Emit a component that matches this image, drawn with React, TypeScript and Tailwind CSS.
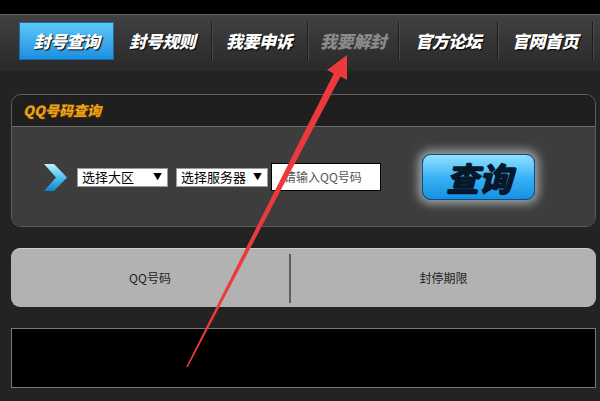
const navItems = [
  { label: "封号查询", w: "w-[95px]", active: true },
  { label: "封号规则", w: "w-[97px]" },
  { label: "我要申诉", w: "w-[96px]" },
  { label: "我要解封", w: "w-[92px]", dim: true },
  { label: "官方论坛", w: "w-[99px]" },
  { label: "官网首页", w: "w-[95px]" },
];

function Chevron() {
  return (
    <svg width="25" height="29" viewBox="0 0 25 29">
      <defs>
        <linearGradient id="chev" x1="0" y1="0" x2="0" y2="1">
          <stop offset="0" stopColor="#bff0ff" />
          <stop offset="0.5" stopColor="#4cc4f0" />
          <stop offset="1" stopColor="#1580c8" />
        </linearGradient>
      </defs>
      <polygon points="1,1 11,1 24,14.5 11,28 1,28 13,14.5" fill="url(#chev)" />
    </svg>
  );
}

function Arrow() {
  return (
    <svg
      className="pointer-events-none absolute left-0 top-0"
      width="600"
      height="401"
      viewBox="0 0 600 401"
    >
      <polygon
        points="347,55 327,70 333.8,73.5 186.3,366.7 187.7,367.3 340.5,76.5 347,80"
        fill="#ec3a3c"
      />
    </svg>
  );
}

export default function App() {
  return (
    <div
      className="relative h-[401px] w-[600px] overflow-hidden bg-[#232323]"
      style={{ fontFamily: '"Noto Sans CJK SC", "Noto Sans", sans-serif' }}
    >
      <div className="h-[14px] bg-black" />
      <div className="h-px bg-[#5c5c5c]" />
      {/* nav */}
      <nav className="flex h-[56px] items-start bg-gradient-to-b from-[#414141] to-[#292929] pl-[19px] pt-[7px]">
        {navItems.map((item, i) => (
          <div
            key={item.label}
            className={
              "flex h-[38px] items-center justify-center " +
              item.w +
              (item.active
                ? " bg-gradient-to-b from-[#5cc8f8] to-[#1a8fe0] border border-[#1b6aa0]"
                : "") +
              (i > 1 ? " border-l border-l-[#1a1a1a] shadow-[inset_1px_0_0_#4c4c4c]" : "")
            }
          >
            <span
              className={
                "text-[17px] font-black italic tracking-[-0.5px] " +
                (item.dim ? "text-[#8a8a8a]" : "text-white [text-shadow:1px_1px_1px_#000]")
              }
            >
              {item.label}
            </span>
          </div>
        ))}
        <div className="h-[38px] border-l border-l-[#1a1a1a] shadow-[inset_1px_0_0_#4c4c4c] w-[8px]" />
      </nav>

      {/* query panel */}
      <div className="ml-[11px] mr-[4px] mt-[23px] h-[133px] overflow-hidden rounded-[10px] border border-[#5e5e5e]">
        <div className="flex h-[32px] items-center border-b border-[#6a6a6a] bg-[#1f1f1f] pl-[11px]">
          <span className="text-[14px] font-black italic text-[#e9a21c] [text-shadow:0_0_1px_#5a3000,1px_1px_0_#4a2a00]">
            QQ号码查询
          </span>
        </div>
        <div className="flex h-[100px] items-center bg-[#3d3d3d] pl-[31px]">
          <Chevron />
          <div className="ml-[9px] flex h-[19px] w-[91px] items-center justify-between border border-[#9a9a9a] bg-white pl-[4px] pr-[5px] text-[13px] text-black">
            <span>选择大区</span>
            <span className="text-[9px]">▼</span>
          </div>
          <div className="ml-[8px] flex h-[19px] w-[92px] items-center justify-between border border-[#9a9a9a] bg-white pl-[4px] pr-[5px] text-[13px] text-black">
            <span>选择服务器</span>
            <span className="text-[9px]">▼</span>
          </div>
          <div className="ml-[3px] flex h-[28px] w-[110px] items-center border border-black bg-white pl-[12px] text-[12px] text-[#555]">
            请输入QQ号码
          </div>
          <button className="ml-[41px] flex h-[46px] w-[113px] items-center justify-center rounded-[9px] border border-[#0b4f85] bg-gradient-to-b from-[#8ee2ff] via-[#38b4f4] to-[#1590e4] shadow-[0_0_10px_4px_rgba(235,245,245,0.55)]">
            <span className="text-[33px] font-black italic leading-none text-[#07182c] [text-shadow:1px_1px_0_#04101e]">
              查询
            </span>
          </button>
        </div>
      </div>

      {/* result header */}
      <div className="ml-[11px] mr-[4px] mt-[21px] flex h-[59px] items-center rounded-[9px] border-t border-[#cfcfcf] bg-[#b2b2b2] text-[12px] text-[#1e1e1e]">
        <div className="flex flex-1 justify-center">QQ号码</div>
        <div className="h-[49px] w-[2px] bg-[#5c5c5c]" />
        <div className="flex w-[305px] justify-center">封停期限</div>
      </div>

      {/* result body */}
      <div className="ml-[11px] mr-[4px] mt-[21px] h-[60px] border border-[#7a7a7a] bg-black" />

      <Arrow />
    </div>
  );
}
